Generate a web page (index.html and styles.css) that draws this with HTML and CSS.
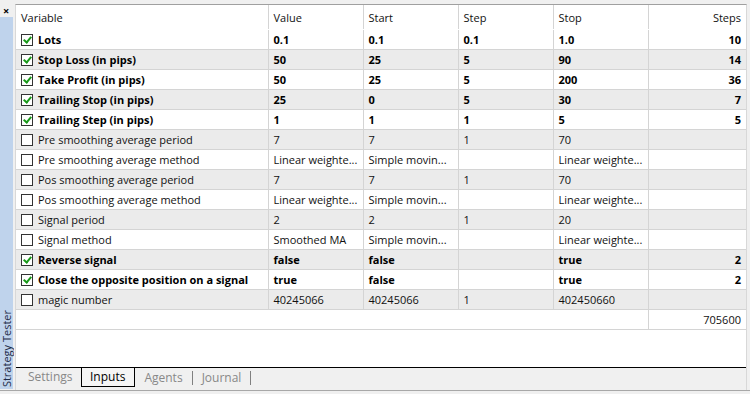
FILE: index.html
```html
<!DOCTYPE html>
<html lang="en">
<head>
    <meta charset="UTF-8">
    <title>Strategy Tester</title>
    <link rel="stylesheet" href="styles.css">
</head>
<body>
    <div class="window">
        <div class="side">
            <div class="close">×</div>
            <div class="side-tab"><span>Strategy Tester</span></div>
        </div>
        <div class="main">
            <table class="grid">
                <colgroup>
                    <col class="c-var"><col class="c-num"><col class="c-num"><col class="c-num"><col class="c-num"><col>
                </colgroup>
                <tr class="head">
                    <td>Variable</td><td>Value</td><td>Start</td><td>Step</td><td>Stop</td><td class="r">Steps</td>
                </tr>
                <tr class="on">
                    <td><span class="box checked"></span>Lots</td><td>0.1</td><td>0.1</td><td>0.1</td><td>1.0</td><td class="r">10</td>
                </tr>
                <tr class="on alt">
                    <td><span class="box checked"></span>Stop Loss (in pips)</td><td>50</td><td>25</td><td>5</td><td>90</td><td class="r">14</td>
                </tr>
                <tr class="on">
                    <td><span class="box checked"></span>Take Profit (in pips)</td><td>50</td><td>25</td><td>5</td><td>200</td><td class="r">36</td>
                </tr>
                <tr class="on alt">
                    <td><span class="box checked"></span>Trailing Stop (in pips)</td><td>25</td><td>0</td><td>5</td><td>30</td><td class="r">7</td>
                </tr>
                <tr class="on">
                    <td><span class="box checked"></span>Trailing Step (in pips)</td><td>1</td><td>1</td><td>1</td><td>5</td><td class="r">5</td>
                </tr>
                <tr class="alt">
                    <td><span class="box"></span>Pre smoothing average period</td><td>7</td><td>7</td><td>1</td><td>70</td><td></td>
                </tr>
                <tr>
                    <td><span class="box"></span>Pre smoothing average method</td><td>Linear weighte...</td><td>Simple movin...</td><td></td><td>Linear weighte...</td><td></td>
                </tr>
                <tr class="alt">
                    <td><span class="box"></span>Pos smoothing average period</td><td>7</td><td>7</td><td>1</td><td>70</td><td></td>
                </tr>
                <tr>
                    <td><span class="box"></span>Pos smoothing average method</td><td>Linear weighte...</td><td>Simple movin...</td><td></td><td>Linear weighte...</td><td></td>
                </tr>
                <tr class="alt">
                    <td><span class="box"></span>Signal period</td><td>2</td><td>2</td><td>1</td><td>20</td><td></td>
                </tr>
                <tr>
                    <td><span class="box"></span>Signal method</td><td>Smoothed MA</td><td>Simple movin...</td><td></td><td>Linear weighte...</td><td></td>
                </tr>
                <tr class="on alt">
                    <td><span class="box checked"></span>Reverse signal</td><td>false</td><td>false</td><td></td><td>true</td><td class="r">2</td>
                </tr>
                <tr class="on">
                    <td><span class="box checked"></span>Close the opposite position on a signal</td><td>true</td><td>false</td><td></td><td>true</td><td class="r">2</td>
                </tr>
                <tr class="alt">
                    <td><span class="box"></span>magic number</td><td>40245066</td><td>40245066</td><td>1</td><td>402450660</td><td></td>
                </tr>
                <tr class="total">
                    <td colspan="5"></td><td class="r">705600</td>
                </tr>
            </table>
            <div class="fill"></div>
            <div class="tabs">
                <span class="tab first">Settings</span>
                <span class="tab active">Inputs</span>
                <span class="tab sep">Agents</span>
                <span class="tab sep">Journal</span>
            </div>
        </div>
    </div>
</body>
</html>
```

FILE: styles.css
```css
body {
    margin: 0;
    background-color: #f0f0f0;
    font-family: "Open Sans", "Liberation Sans", sans-serif;
    font-size: 11px;
    color: #111;
}
.window {
    box-sizing: border-box;
    display: flex;
    height: 391px;
    padding-top: 4px;
    padding-right: 3px;
    border-bottom: 1px solid #a8a8a8;
}
.side {
    width: 15px;
    display: flex;
    flex-direction: column;
    margin-top: -4px;
}
.close {
    height: 17px;
    font-weight: bold;
    font-size: 11px;
    line-height: 22px;
    padding-left: 3px;
    color: #000;
}
.side-tab {
    flex: 1;
    width: 13px;
    margin-bottom: 1px;
    background-color: #bfd3ec;
    display: flex;
    align-items: flex-end;
    justify-content: center;
}
.side-tab span {
    writing-mode: vertical-rl;
    transform: rotate(180deg);
    color: #1e2c48;
    font-size: 11px;
    line-height: 13px;
    padding-top: 2px;
}
.main {
    flex: 1;
    display: flex;
    flex-direction: column;
    background-color: #fff;
    border-top: 1px solid #a0a0a0;
    border-left: 1px solid #d8d8d8;
    border-right: 1px solid #d8d8d8;
}
.grid {
    border-collapse: collapse;
    width: 730px;
    table-layout: fixed;
}
.c-var {
    width: 252px;
}
.c-num {
    width: 95px;
}
.grid td {
    height: 19px;
    padding: 0 5px;
    border-right: 1px solid #d4d4d4;
    border-bottom: 1px solid #d4d4d4;
    white-space: nowrap;
    overflow: hidden;
}
.grid td:last-child {
    border-right: none;
}
.grid .head td {
    height: 24px;
    border-bottom-color: #fff;
}
.grid .r {
    text-align: right;
}
.alt td {
    background-color: #ebebeb;
}
.on td {
    font-weight: bold;
    color: #000;
}
.total td {
    border-right: none;
}
.total td.r {
    border-left: 1px solid #d4d4d4;
}
.box {
    display: inline-block;
    width: 10px;
    height: 10px;
    border: 1px solid #333;
    background-color: #fff;
    vertical-align: -2px;
    margin-right: 5px;
    position: relative;
}
.box.checked::after {
    content: "";
    position: absolute;
    left: 3px;
    top: 0px;
    width: 3px;
    height: 6px;
    border-right: 2px solid #1a9a1a;
    border-bottom: 2px solid #1a9a1a;
    transform: rotate(40deg);
}
.fill {
    flex: 1;
}
.tabs {
    height: 22px;
    border-top: 1px solid #000;
    background-color: #f0f0f0;
    display: flex;
    align-items: flex-start;
    padding-left: 12px;
}
.tab {
    height: 18px;
    line-height: 17px;
    color: #888;
    font-size: 12px;
}
.tab.first {
    width: 53px;
}
.tab.active {
    color: #000;
    background-color: #f5f5f5;
    border: 1px solid #000;
    border-top: none;
    padding: 0 9px 0 8px;
}
.tab.sep {
    border-right: 1px solid #808080;
    height: 14px;
    line-height: 14px;
    margin-top: 3px;
    padding: 0 9px;
}
```
